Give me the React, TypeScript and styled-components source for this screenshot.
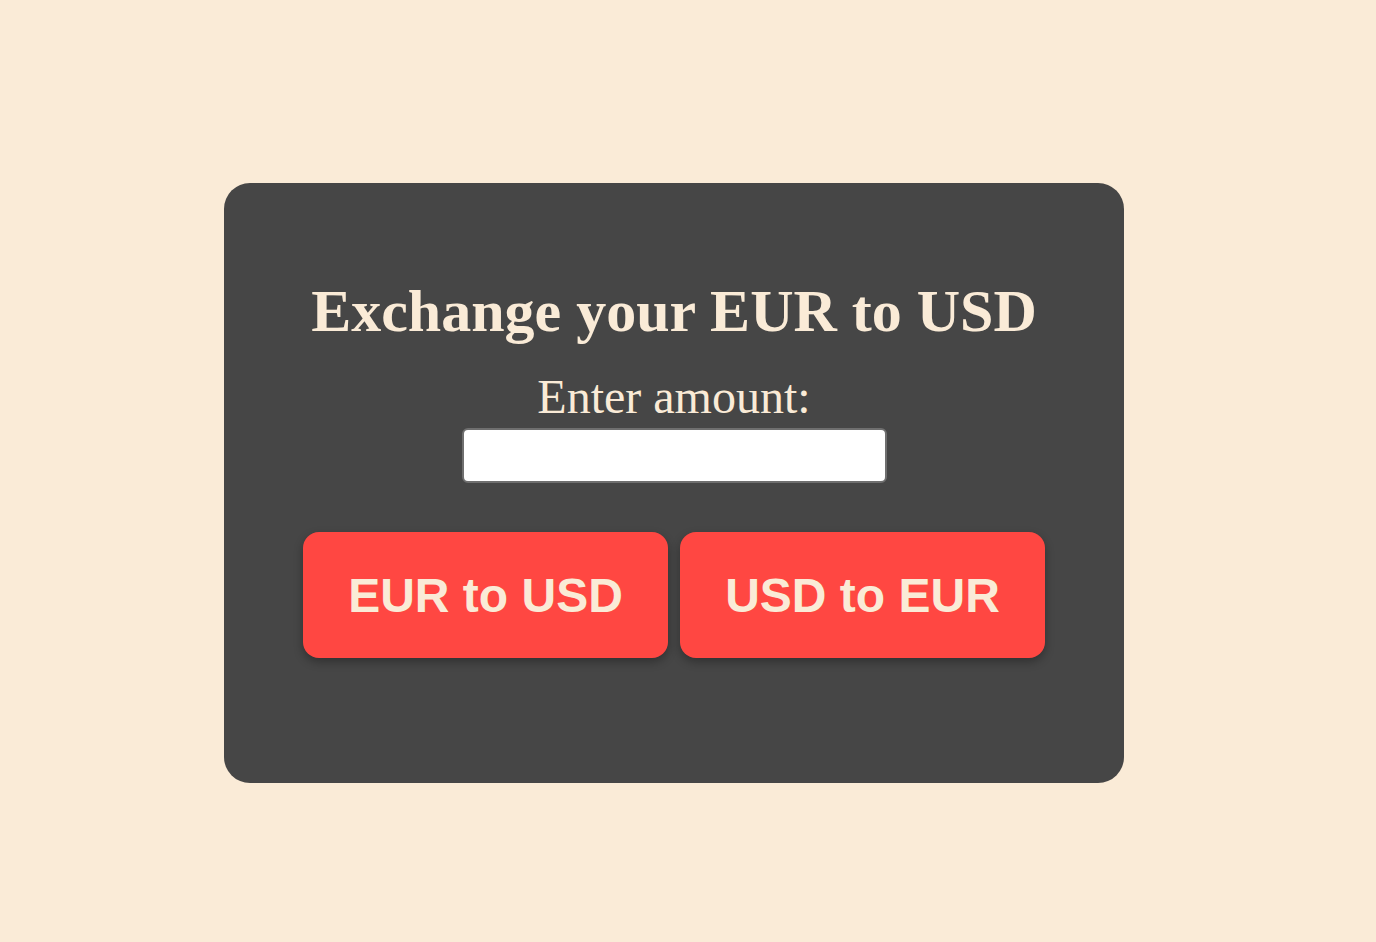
import React from "react";
import styled, { createGlobalStyle } from "styled-components";

const GlobalStyle = createGlobalStyle`
  html, body {
    margin: 0;
    padding: 0;
    background: #faebd7;
  }
`;

const Page = styled.div`
  width: 1376px;
  height: 942px;
  display: flex;
  justify-content: flex-start;
  padding: 183px 0 0 224px;
  box-sizing: border-box;
`;

const Card = styled.div`
  width: 900px;
  height: 600px;
  box-sizing: border-box;
  padding-top: 94px;
  background: #464646;
  border-radius: 26px;
  display: flex;
  flex-direction: column;
  align-items: center;
  color: #faebd7;
`;

const Title = styled.h1`
  margin: 0;
  font-family: "Liberation Serif", "Times New Roman", serif;
  font-weight: 700;
  font-size: 60px;
  line-height: 69px;
`;

const Label = styled.label`
  margin-top: 23px;
  font-family: "Liberation Serif", "Times New Roman", serif;
  font-size: 48px;
  line-height: 55px;
`;

const AmountInput = styled.input`
  margin-top: 4px;
  width: 425px;
  height: 55px;
  box-sizing: border-box;
  border: 2px solid #6f6f6f;
  border-radius: 6px;
  background: #fff;
  font-size: 24px;
  padding: 0 8px;
  outline: none;
`;

const ButtonRow = styled.div`
  margin-top: 49px;
  display: flex;
  gap: 12px;
`;

const ConvertButton = styled.button`
  width: 365px;
  height: 126px;
  border: none;
  border-radius: 16px;
  background: #ff4742;
  color: #faebd7;
  font-family: "Liberation Sans", Arial, sans-serif;
  font-weight: 700;
  font-size: 48px;
  box-shadow: 0 4px 10px rgba(0, 0, 0, 0.3);
  cursor: pointer;
`;

export default function App() {
  return (
    <>
      <GlobalStyle />
      <Page>
        <Card>
          <Title>Exchange your EUR to USD</Title>
          <Label htmlFor="amount">Enter amount:</Label>
          <AmountInput id="amount" type="number" />
          <ButtonRow>
            <ConvertButton>EUR to USD</ConvertButton>
            <ConvertButton>USD to EUR</ConvertButton>
          </ButtonRow>
        </Card>
      </Page>
    </>
  );
}
